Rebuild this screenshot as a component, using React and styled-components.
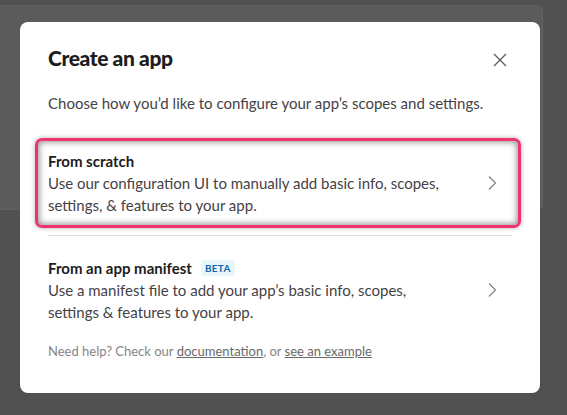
import React from "react";
import styled, { createGlobalStyle } from "styled-components";

const GlobalStyle = createGlobalStyle`
  html, body {
    margin: 0;
    padding: 0;
    background: #515151;
    font-family: Lato, "Noto Sans", sans-serif;
  }
  * { box-sizing: border-box; }
`;

const Page = styled.div`
  position: relative;
  width: 567px;
  height: 415px;
  overflow: hidden;
  padding-top: 5px;
`;

const BackCard = styled.div`
  width: 543px;
  height: 205px;
  background: #5b5b5b;
  border: 1px solid #636363;
  border-left: none;
  border-radius: 0 6px 6px 0;
`;

const Modal = styled.div`
  position: absolute;
  left: 20px;
  top: 22px;
  width: 520px;
  height: 371px;
  background: #ffffff;
  border-radius: 8px;
  padding: 22px 28px 32px;
  display: flex;
  flex-direction: column;
`;

const Header = styled.div`
  display: flex;
  align-items: center;
  justify-content: space-between;
  height: 28px;
`;

const Title = styled.h1`
  margin: 0;
  font-size: 21px;
  line-height: 28px;
  font-weight: 900;
  color: #1d1c1d;
  letter-spacing: -0.4px;
`;

const CloseButton = styled.button`
  width: 24px;
  height: 24px;
  border: none;
  background: none;
  padding: 0;
  display: flex;
  align-items: center;
  justify-content: center;
  color: #616061;
  margin-top: 4px;
`;

const Subtitle = styled.p`
  margin: 20px 0 0;
  font-size: 15px;
  line-height: 22px;
  color: #454245;
`;

const OptionList = styled.div`
  margin: 24px -9px 0 -13px;
  display: flex;
  flex-direction: column;
`;

const Option = styled.div`
  display: flex;
  align-items: center;
  padding: 9px 10px;
  border: 3px solid ${(p) => (p.$highlighted ? "#f0336c" : "transparent")};
  border-radius: 7px;
  box-shadow: ${(p) =>
    p.$highlighted
      ? "0 0 5px rgba(0,0,0,0.3), inset 0 0 6px 1px rgba(0,0,0,0.45)"
      : "none"};
  margin-top: ${(p) => (p.$highlighted ? "0" : "9px")};
`;

const OptionText = styled.div`
  flex: 1;
  padding-right: 30px;
`;

const OptionTitle = styled.div`
  display: flex;
  align-items: center;
  font-size: 15px;
  line-height: 22px;
  font-weight: 700;
  color: #1d1c1d;
`;

const Badge = styled.span`
  margin-left: 9px;
  padding: 0 4px;
  height: 16px;
  line-height: 16px;
  font-size: 10px;
  font-weight: 700;
  letter-spacing: 0.3px;
  color: #1264a3;
  background: #e8f5fa;
  border-radius: 3px;
`;

const OptionDesc = styled.div`
  font-size: 15px;
  line-height: 22px;
  color: #454245;
`;

const Chevron = styled.div`
  width: 24px;
  display: flex;
  justify-content: center;
  color: #868686;
  margin-right: 4px;
`;

const Divider = styled.hr`
  margin: 7px 9px 0 13px;
  border: none;
  border-top: 1px solid #dddddd;
  height: 0;
`;

const Footer = styled.p`
  margin: 7px 0 0;
  font-size: 13px;
  line-height: 18px;
  color: #868686;

  a {
    color: #696969;
    text-decoration: underline;
  }
`;

const ChevronIcon = () => (
  <svg width="10" height="16" viewBox="0 0 10 16" fill="none">
    <path d="M2 1.5L8.5 8L2 14.5" stroke="currentColor" strokeWidth="1.3" />
  </svg>
);

const options = [
  {
    title: "From scratch",
    desc: "Use our configuration UI to manually add basic info, scopes, settings, & features to your app.",
    highlighted: true,
  },
  {
    title: "From an app manifest",
    badge: "BETA",
    desc: "Use a manifest file to add your app’s basic info, scopes, settings & features to your app.",
  },
];

export default function App() {
  return (
    <Page>
      <GlobalStyle />
      <BackCard />
      <Modal>
        <Header>
          <Title>Create an app</Title>
          <CloseButton aria-label="Close">
            <svg width="14" height="14" viewBox="0 0 14 14">
              <path
                d="M1 1L13 13M13 1L1 13"
                stroke="currentColor"
                strokeWidth="1.4"
              />
            </svg>
          </CloseButton>
        </Header>
        <Subtitle>
          Choose how you’d like to configure your app’s scopes and settings.
        </Subtitle>
        <OptionList>
          <Option $highlighted={options[0].highlighted}>
            <OptionText>
              <OptionTitle>{options[0].title}</OptionTitle>
              <OptionDesc>{options[0].desc}</OptionDesc>
            </OptionText>
            <Chevron>
              <ChevronIcon />
            </Chevron>
          </Option>
          <Divider />
          <Option>
            <OptionText>
              <OptionTitle>
                {options[1].title}
                <Badge>{options[1].badge}</Badge>
              </OptionTitle>
              <OptionDesc>{options[1].desc}</OptionDesc>
            </OptionText>
            <Chevron>
              <ChevronIcon />
            </Chevron>
          </Option>
        </OptionList>
        <Footer>
          Need help? Check our <a href="#">documentation</a>, or{" "}
          <a href="#">see an example</a>
        </Footer>
      </Modal>
    </Page>
  );
}
